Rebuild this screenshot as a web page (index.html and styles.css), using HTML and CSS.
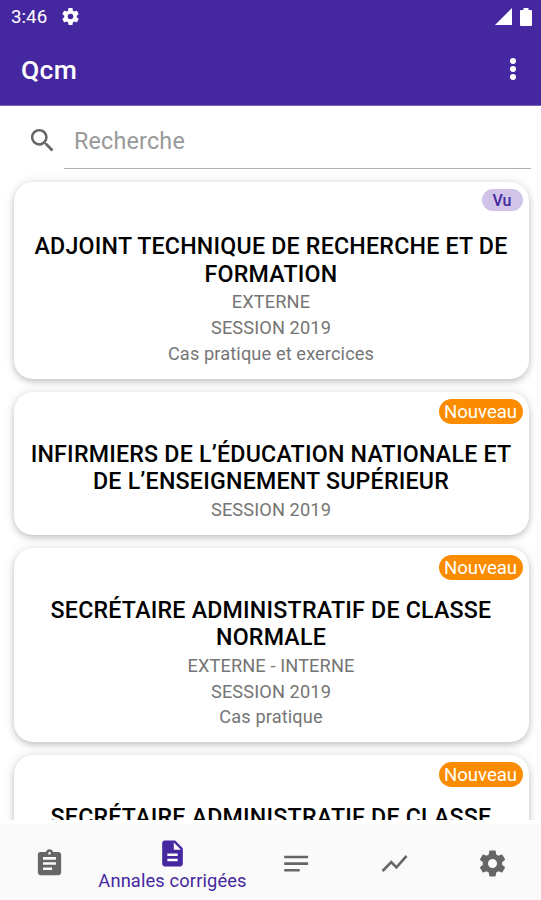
FILE: index.html
```html
<!DOCTYPE html>
<html lang="fr">

<head>
  <meta charset="UTF-8">
  <meta name="viewport" content="width=device-width, initial-scale=1.0">
  <title>Qcm</title>
  <link rel="stylesheet" href="styles.css">
</head>

<body>
  <header class="header">
    <div class="status-bar">
      <span class="status-time">3:46</span>
      <svg class="status-gear" viewBox="0 0 24 24"><path d="M19.14 12.94c.04-.3.06-.61.06-.94 0-.32-.02-.64-.07-.94l2.03-1.58c.18-.14.23-.41.12-.61l-1.92-3.32c-.12-.22-.37-.29-.59-.22l-2.39.96c-.5-.38-1.03-.7-1.62-.94l-.36-2.54c-.04-.24-.24-.41-.48-.41h-3.84c-.24 0-.43.17-.47.41l-.36 2.54c-.59.24-1.13.57-1.62.94l-2.39-.96c-.22-.08-.47 0-.59.22L2.74 8.87c-.12.21-.08.47.12.61l2.03 1.58c-.05.3-.09.63-.09.94s.02.64.07.94l-2.03 1.58c-.18.14-.23.41-.12.61l1.92 3.32c.12.22.37.29.59.22l2.39-.96c.5.38 1.03.7 1.62.94l.36 2.54c.05.24.24.41.48.41h3.84c.24 0 .44-.17.47-.41l.36-2.54c.59-.24 1.13-.56 1.62-.94l2.39.96c.22.08.47 0 .59-.22l1.92-3.32c.12-.22.07-.47-.12-.61l-2.01-1.58zM12 15.2A3.2 3.2 0 1 1 12 8.8a3.2 3.2 0 0 1 0 6.4z"/></svg>
      <svg class="status-signal" viewBox="0 0 17 17"><path d="M0 17 17 0v17z"/></svg>
      <svg class="status-battery" viewBox="0 0 12 18"><path d="M3.5 0h5v2H11a1 1 0 0 1 1 1v14a1 1 0 0 1-1 1H1a1 1 0 0 1-1-1V3a1 1 0 0 1 1-1h2.5z"/></svg>
    </div>
    <div class="toolbar">
      <h1 class="toolbar-title">Qcm</h1>
      <svg class="toolbar-more" viewBox="0 0 8 24"><circle cx="4" cy="4" r="3"/><circle cx="4" cy="12" r="3"/><circle cx="4" cy="20" r="3"/></svg>
    </div>
  </header>

  <main class="content">
    <div class="search">
      <svg class="search-icon" viewBox="0 0 24 24"><path d="M15.5 14h-.79l-.28-.27A6.471 6.471 0 0 0 16 9.5 6.5 6.5 0 1 0 9.5 16c1.61 0 3.09-.59 4.23-1.57l.27.28v.79l5 4.99L20.49 19l-4.99-5zm-6 0C7.01 14 5 11.99 5 9.5S7.01 5 9.5 5 14 7.01 14 9.5 11.99 14 9.5 14z"/></svg>
      <div class="search-field">Recherche</div>
    </div>

    <div class="list">
      <article class="card card-seen">
        <span class="badge badge-seen">Vu</span>
        <h2>ADJOINT TECHNIQUE DE RECHERCHE ET DE<br>FORMATION</h2>
        <p>EXTERNE</p>
        <p>SESSION 2019</p>
        <p>Cas pratique et exercices</p>
      </article>
      <article class="card">
        <span class="badge">Nouveau</span>
        <h2>INFIRMIERS DE L’ÉDUCATION NATIONALE ET<br>DE L’ENSEIGNEMENT SUPÉRIEUR</h2>
        <p>SESSION 2019</p>
      </article>
      <article class="card">
        <span class="badge">Nouveau</span>
        <h2>SECRÉTAIRE ADMINISTRATIF DE CLASSE<br>NORMALE</h2>
        <p>EXTERNE - INTERNE</p>
        <p>SESSION 2019</p>
        <p>Cas pratique</p>
      </article>
      <article class="card">
        <span class="badge">Nouveau</span>
        <h2>SECRÉTAIRE ADMINISTRATIF DE CLASSE</h2>
      </article>
    </div>
  </main>

  <nav class="bottom-nav">
    <a class="nav-item">
      <svg viewBox="0 0 24 24"><path d="M19 3h-4.18C14.4 1.84 13.3 1 12 1s-2.4.84-2.82 2H5c-1.1 0-2 .9-2 2v14c0 1.1.9 2 2 2h14c1.1 0 2-.9 2-2V5c0-1.1-.9-2-2-2zm-7 0c.55 0 1 .45 1 1s-.45 1-1 1-1-.45-1-1 .45-1 1-1zm2 14H7v-2h7v2zm3-4H7v-2h10v2zm0-4H7V7h10v2z"/></svg>
    </a>
    <a class="nav-item active">
      <svg viewBox="0 0 24 24"><path d="M14 2H6c-1.1 0-1.99.9-1.99 2L4 20c0 1.1.89 2 1.99 2H18c1.1 0 2-.9 2-2V8l-6-6zm2 16H8v-2h8v2zm0-4H8v-2h8v2zm-3-5V3.5L18.5 9H13z"/></svg>
      <span>Annales corrigées</span>
    </a>
    <a class="nav-item">
      <svg viewBox="0 0 24 24"><path d="M2.5 16.2v2h12v-2zM2.5 6v2h18.500V6zm0 5.100v2h18.500v-2z"/></svg>
    </a>
    <a class="nav-item">
      <svg viewBox="0 0 24 24"><path d="M3.5 18.49l6-6.01 4 4L22 6.92l-1.41-1.41-7.09 7.97-4-4L2 16.99z"/></svg>
    </a>
    <a class="nav-item">
      <svg viewBox="0 0 24 24"><path d="M19.43 12.98c.04-.32.07-.64.07-.98s-.03-.66-.07-.98l2.11-1.65c.19-.15.24-.42.12-.64l-2-3.46c-.12-.22-.39-.3-.61-.22l-2.49 1c-.52-.4-1.08-.73-1.69-.98l-.38-2.65C14.46 2.18 14.25 2 14 2h-4c-.25 0-.46.18-.49.42l-.38 2.65c-.61.25-1.17.59-1.69.98l-2.49-1c-.23-.09-.49 0-.61.22l-2 3.46c-.13.22-.07.49.12.64l2.11 1.65c-.04.32-.07.65-.07.98s.03.66.07.98l-2.11 1.65c-.19.15-.24.42-.12.64l2 3.46c.12.22.39.3.61.22l2.49-1c.52.4 1.08.73 1.69.98l.38 2.65c.03.24.24.42.49.42h4c.25 0 .46-.18.49-.42l.38-2.65c.61-.25 1.17-.59 1.69-.98l2.49 1c.23.09.49 0 .61-.22l2-3.46c.12-.22.07-.49-.12-.64l-2.11-1.65zM12 15.5c-1.93 0-3.5-1.57-3.5-3.5s1.57-3.5 3.5-3.5 3.5 1.57 3.5 3.5-1.57 3.5-3.5 3.5z"/></svg>
    </a>
  </nav>
</body>

</html>
```
FILE: styles.css
```css
* {
  box-sizing: border-box;
}

body {
  display: flex;
  flex-direction: column;
  height: 100vh;
  margin: 0;
  overflow: hidden;
  font-family: Roboto, "Liberation Sans", sans-serif;
  background-color: #fff;
}

h1,
h2,
p {
  margin: 0;
}

svg {
  display: block;
  flex: none;
  fill: currentColor;
}

.header {
  flex: none;
  height: 106px;
  color: #fff;
  background-color: #4527a0;
  border-bottom: 1px solid #7a66bb;
}

.status-bar {
  display: flex;
  align-items: center;
  height: 33px;
  padding: 0 9px 0 11px;
}

.status-time {
  padding-top: 1px;
  font-size: 18.8px;
  line-height: 33px;
}

.status-gear {
  width: 21px;
  height: 21px;
  margin: 0 auto 0 13px;
}

.status-signal {
  width: 17px;
  height: 17px;
  margin-right: 8px;
}

.status-battery {
  width: 12px;
  height: 18px;
}

.toolbar {
  display: flex;
  align-items: center;
  justify-content: space-between;
  height: 72px;
  padding: 0 24px 0 21px;
}

.toolbar-title {
  font-size: 26.5px;
  font-weight: 500;
  letter-spacing: 0.3px;
}

.toolbar-more {
  width: 8px;
  height: 24px;
}

.content {
  flex: 1;
  min-height: 0;
  overflow: hidden;
}

.search {
  display: flex;
  align-items: center;
  height: 63px;
  padding: 0 10px 0 27px;
}

.search-icon {
  width: 31px;
  height: 31px;
  margin-top: 6px;
  color: #666;
}

.search-field {
  flex: 1;
  align-self: stretch;
  margin-left: 6px;
  padding: 8px 0 0 10px;
  font-size: 23.3px;
  line-height: 55px;
  letter-spacing: 0.2px;
  color: #999;
  border-bottom: 1.5px solid #b0b0b0;
}

.list {
  display: flex;
  flex-direction: column;
  gap: 13px;
  padding: 12.5px 12.5px 0 13.5px;
}

.card {
  position: relative;
  padding: 49px 0 12.2px;
  text-align: center;
  background-color: #fff;
  border-radius: 19px;
  box-shadow: 0 3px 6px rgba(0, 0, 0, 0.18), 0 0 12px rgba(0, 0, 0, 0.1);
}

.card-seen {
  padding-top: 51.5px;
}

.card h2 {
  margin-bottom: 0.8px;
  font-size: 23.2px;
  font-weight: 500;
  line-height: 27.7px;
  letter-spacing: 0.22px;
  white-space: nowrap;
  color: #000;
}

.card p {
  font-size: 18.2px;
  line-height: 25.7px;
  letter-spacing: 0.12px;
  color: #757575;
}

.badge {
  position: absolute;
  top: 7px;
  right: 6px;
  width: 84px;
  height: 25px;
  font-size: 18.6px;
  line-height: 27px;
  color: #fff;
  background-color: #fb8c00;
  border-radius: 13px;
}

.badge-seen {
  width: 41px;
  height: 22px;
  font-size: 16px;
  font-weight: 500;
  line-height: 23px;
  color: #4527a0;
  background-color: #d1c4e9;
}

.bottom-nav {
  display: flex;
  flex: none;
  height: 80px;
  color: #666;
  background-color: #fafafa;
  border-top: 4px solid #fff;
}

.nav-item {
  display: flex;
  flex-direction: column;
  align-items: center;
  justify-content: center;
  width: 98px;
  padding-top: 3px;
}

.nav-item svg {
  width: 31px;
  height: 31px;
}

.nav-item.active {
  flex: 1;
  justify-content: flex-start;
  padding-top: 14px;
  font-size: 18.3px;
  line-height: 24px;
  letter-spacing: 0.13px;
  color: #4527a0;
}
```
